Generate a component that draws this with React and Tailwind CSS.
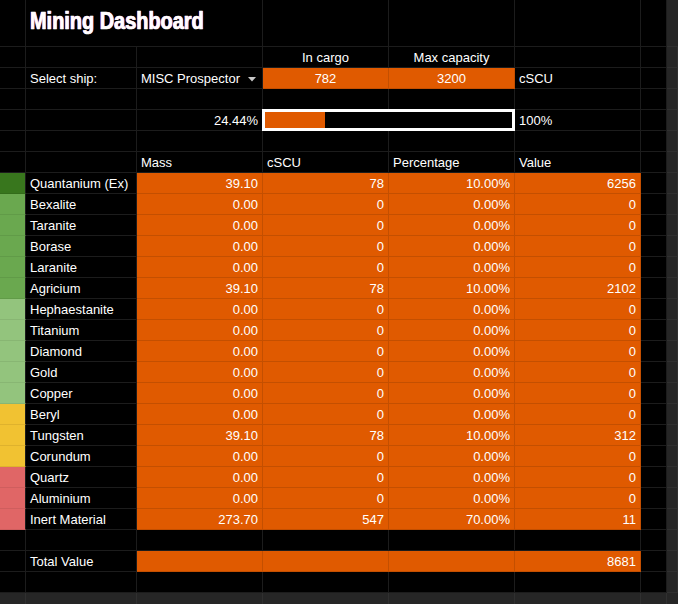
import React from 'react';

const ORANGE = 'bg-[#e05a00] border-[#c44f00] text-white';
const BLACK = 'bg-black border-[#1c1c1c] text-white';
const GREY = 'bg-[#262626] border-[#303030]';

const strips = {
    dark: 'bg-[#38761d] border-b-[#336c1a]',
    green: 'bg-[#6aa84f] border-b-[#619b48]',
    light: 'bg-[#93c47d] border-b-[#88b673]',
    yellow: 'bg-[#f1c232] border-b-[#dfb22d]',
    red: 'bg-[#e06666] border-b-[#cf5e5e]',
};

const materials = [
    { name: 'Quantanium (Ex)', strip: 'dark', mass: '39.10', scu: '78', pct: '10.00%', value: '6256' },
    { name: 'Bexalite', strip: 'green', mass: '0.00', scu: '0', pct: '0.00%', value: '0' },
    { name: 'Taranite', strip: 'green', mass: '0.00', scu: '0', pct: '0.00%', value: '0' },
    { name: 'Borase', strip: 'green', mass: '0.00', scu: '0', pct: '0.00%', value: '0' },
    { name: 'Laranite', strip: 'green', mass: '0.00', scu: '0', pct: '0.00%', value: '0' },
    { name: 'Agricium', strip: 'green', mass: '39.10', scu: '78', pct: '10.00%', value: '2102' },
    { name: 'Hephaestanite', strip: 'light', mass: '0.00', scu: '0', pct: '0.00%', value: '0' },
    { name: 'Titanium', strip: 'light', mass: '0.00', scu: '0', pct: '0.00%', value: '0' },
    { name: 'Diamond', strip: 'light', mass: '0.00', scu: '0', pct: '0.00%', value: '0' },
    { name: 'Gold', strip: 'light', mass: '0.00', scu: '0', pct: '0.00%', value: '0' },
    { name: 'Copper', strip: 'light', mass: '0.00', scu: '0', pct: '0.00%', value: '0' },
    { name: 'Beryl', strip: 'yellow', mass: '0.00', scu: '0', pct: '0.00%', value: '0' },
    { name: 'Tungsten', strip: 'yellow', mass: '39.10', scu: '78', pct: '10.00%', value: '312' },
    { name: 'Corundum', strip: 'yellow', mass: '0.00', scu: '0', pct: '0.00%', value: '0' },
    { name: 'Quartz', strip: 'red', mass: '0.00', scu: '0', pct: '0.00%', value: '0' },
    { name: 'Aluminium', strip: 'red', mass: '0.00', scu: '0', pct: '0.00%', value: '0' },
    { name: 'Inert Material', strip: 'red', mass: '273.70', scu: '547', pct: '70.00%', value: '11' },
];

function Cell({ className = '', children }) {
    return (
        <div className={`h-[21px] border-r border-b flex items-end pb-[2px] px-[4px] whitespace-nowrap leading-[15px] ${className}`}>
            {children}
        </div>
    );
}

function BlankRow() {
    return (
        <>
            <Cell className={BLACK} />
            <Cell className={BLACK} />
            <Cell className={BLACK} />
            <Cell className={BLACK} />
            <Cell className={BLACK} />
            <Cell className={BLACK} />
            <Cell className={BLACK} />
            <Cell className={GREY} />
        </>
    );
}

export default function App() {
    return (
        <div className="w-[678px] h-[604px] overflow-hidden bg-[#262626] font-['Liberation_Sans',Arial,sans-serif] text-[13px]">
            <div className="grid grid-cols-[26px_111px_126px_126px_126px_126px_26px_11px]">
                {/* title */}
                <div className={`h-[47px] border-r border-b ${BLACK}`} />
                <div className={`col-span-2 h-[47px] border-r border-b pl-[4px] pt-[7px] ${BLACK}`}>
                    <h1 className="origin-left scale-x-[0.83] whitespace-nowrap font-['Liberation_Sans',Arial,sans-serif] font-bold text-[24px] leading-[28px] [-webkit-text-stroke:0.7px_white] [text-shadow:-0.7px_0_#ff2a2a,0.7px_0_#2a4bff]">
                        Mining Dashboard
                    </h1>
                </div>
                <div className={`h-[47px] border-r border-b ${BLACK}`} />
                <div className={`h-[47px] border-r border-b ${BLACK}`} />
                <div className={`h-[47px] border-r border-b ${BLACK}`} />
                <div className={`h-[47px] border-r border-b ${BLACK}`} />
                <div className={`h-[47px] border-b ${GREY}`} />

                {/* cargo headings */}
                <Cell className={BLACK} />
                <Cell className={BLACK} />
                <Cell className={BLACK} />
                <Cell className={`${BLACK} justify-center`}>In cargo</Cell>
                <Cell className={`${BLACK} justify-center`}>Max capacity</Cell>
                <Cell className={BLACK} />
                <Cell className={BLACK} />
                <Cell className={GREY} />

                {/* select ship */}
                <Cell className={BLACK} />
                <Cell className={BLACK}>Select ship:</Cell>
                <Cell className={`${BLACK} justify-between`}>
                    <span>MISC Prospector</span>
                    <svg width="8" height="5" viewBox="0 0 8 5" className="mb-[4px] mr-[2px]">
                        <path d="M0 0 L8 0 L4 4.5 Z" fill="#c8c8c8" />
                    </svg>
                </Cell>
                <Cell className={`${ORANGE} justify-center`}>782</Cell>
                <Cell className={`${ORANGE} justify-center`}>3200</Cell>
                <Cell className={BLACK}>cSCU</Cell>
                <Cell className={BLACK} />
                <Cell className={GREY} />

                <BlankRow />

                {/* progress */}
                <Cell className={BLACK} />
                <Cell className={BLACK} />
                <Cell className={`${BLACK} justify-end`}>24.44%</Cell>
                <div className={`col-span-2 h-[21px] border-r border-b ${BLACK}`}>
                    <div className="relative -mx-px -mt-px h-[22px] border-[3px] border-white bg-black">
                        <div className="h-full w-[24.44%] bg-[#e05a00]" />
                    </div>
                </div>
                <Cell className={BLACK}>100%</Cell>
                <Cell className={BLACK} />
                <Cell className={GREY} />

                <BlankRow />

                {/* table header */}
                <Cell className={BLACK} />
                <Cell className={BLACK} />
                <Cell className={BLACK}>Mass</Cell>
                <Cell className={BLACK}>cSCU</Cell>
                <Cell className={BLACK}>Percentage</Cell>
                <Cell className={BLACK}>Value</Cell>
                <Cell className={BLACK} />
                <Cell className={GREY} />

                {materials.map((m) => (
                    <React.Fragment key={m.name}>
                        <Cell className={`border-r-[#1c1c1c] ${strips[m.strip]}`} />
                        <Cell className={BLACK}>{m.name}</Cell>
                        <Cell className={`${ORANGE} justify-end`}>{m.mass}</Cell>
                        <Cell className={`${ORANGE} justify-end`}>{m.scu}</Cell>
                        <Cell className={`${ORANGE} justify-end`}>{m.pct}</Cell>
                        <Cell className={`${ORANGE} justify-end`}>{m.value}</Cell>
                        <Cell className={BLACK} />
                        <Cell className={GREY} />
                    </React.Fragment>
                ))}

                <BlankRow />

                {/* total */}
                <Cell className={BLACK} />
                <Cell className={BLACK}>Total Value</Cell>
                <Cell className={ORANGE} />
                <Cell className={ORANGE} />
                <Cell className={ORANGE} />
                <Cell className={`${ORANGE} justify-end`}>8681</Cell>
                <Cell className={BLACK} />
                <Cell className={GREY} />

                <BlankRow />

                {/* off-sheet area */}
                <div className={`h-[11px] border-r ${GREY}`} />
                <div className={`h-[11px] border-r ${GREY}`} />
                <div className={`h-[11px] border-r ${GREY}`} />
                <div className={`h-[11px] border-r ${GREY}`} />
                <div className={`h-[11px] border-r ${GREY}`} />
                <div className={`h-[11px] border-r ${GREY}`} />
                <div className={`h-[11px] border-r ${GREY}`} />
                <div className={`h-[11px] ${GREY}`} />
            </div>
        </div>
    );
}
